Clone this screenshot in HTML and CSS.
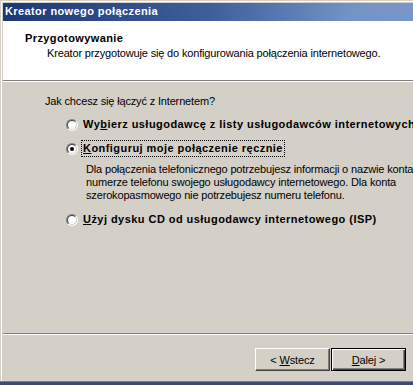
FILE: index.html
```html
<!DOCTYPE html>
<html>
<head>
    <meta charset="utf-8">
    <title>Kreator nowego połączenia</title>
    <link rel="stylesheet" href="styles.css">
</head>
<body>
<div class="window">
    <div class="frame">
        <div class="titlebar">Kreator nowego połączenia</div>
        <div class="header">
            <div class="header-title">Przygotowywanie</div>
            <div class="header-sub">Kreator przygotowuje się do konfigurowania połączenia internetowego.</div>
        </div>
        <div class="content">
            <div class="question">Jak chcesz się łączyć z Internetem?</div>
            <div class="option">
                <span class="radio"></span>
                <span class="option-label">Wy<u>b</u>ierz usługodawcę z listy usługodawców internetowych</span>
            </div>
            <div class="option">
                <span class="radio checked"></span>
                <span class="option-label focused"><u>K</u>onfiguruj moje połączenie ręcznie</span>
            </div>
            <div class="option-desc">Dla połączenia telefonicznego potrzebujesz informacji o nazwie konta,<br>
                numerze telefonu swojego usługodawcy internetowego. Dla konta<br>
                szerokopasmowego nie potrzebujesz numeru telefonu.</div>
            <div class="option">
                <span class="radio"></span>
                <span class="option-label"><u>U</u>żyj dysku CD od usługodawcy internetowego (ISP)</span>
            </div>
        </div>
        <div class="buttons">
            <button class="btn">&lt; <u>W</u>stecz</button>
            <button class="btn default"><u>D</u>alej &gt;</button>
        </div>
    </div>
</div>
</body>
</html>
```

FILE: styles.css
```css
html, body {
    margin: 0;
    padding: 0;
    overflow: hidden;
}

body {
    background: #3a4a72;
    width: 413px;
    height: 385px;
    font: 11px "Liberation Sans", Arial, sans-serif;
    letter-spacing: -0.16px;
    color: #000;
}

/* outer window border: light gray, then white */
.window {
    width: 413px;
    height: 382px;
    background: #d4d0c8;
    border-bottom: 1px solid #808080;
    box-sizing: border-box;
    padding: 1px 0 0 1px;
    overflow: hidden;
}

.frame {
    width: 520px;
    height: 100%;
    border-left: 1px solid #fff;
    border-top: 1px solid #fff;
    padding: 1px 0 0 1px;
    box-sizing: border-box;
    display: flex;
    flex-direction: column;
}

.titlebar {
    height: 18px;
    line-height: 17px;
    padding-left: 2px;
    color: #fff;
    font-weight: bold;
    letter-spacing: 0.4px;
    background: linear-gradient(to right, #1c3874 0%, #3f5e9c 40%, #7594c6 68%, #7d9dcc 100%);
    white-space: nowrap;
}

.header {
    height: 60px;
    background: #fff;
    border-bottom: 1px solid #808080;
    box-shadow: 0 1px 0 #fff;
    padding: 11px 0 0 22px;
    box-sizing: border-box;
}

.header-title {
    font-weight: bold;
    letter-spacing: 0.4px;
    line-height: 13px;
}

.header-sub {
    margin-top: 2px;
    padding-left: 22px;
    line-height: 13px;
    white-space: nowrap;
}

.content {
    flex: 1;
    padding: 13px 0 0 42px;
    margin-top: 1px;
    border-bottom: 1px solid #808080;
    box-shadow: 0 1px 0 #fff;
}

.question {
    line-height: 13px;
    margin-bottom: 10px;
}

.option {
    display: flex;
    align-items: center;
    padding-left: 21px;
    height: 13px;
    margin-bottom: 11px;
    white-space: nowrap;
}

.option-label {
    font-weight: bold;
    letter-spacing: 0.45px;
    margin-left: 5px;
    line-height: 13px;
}

.focused {
    outline: 1px dotted #000;
    outline-offset: 1px;
}

/* classic sunken radio button */
.radio {
    width: 12px;
    height: 12px;
    box-sizing: border-box;
    border-radius: 50%;
    border: 1px solid;
    border-color: #808080 #fff #fff #808080;
    flex: none;
    position: relative;
}

.radio::before {
    content: "";
    position: absolute;
    inset: 0;
    border-radius: 50%;
    border: 1px solid;
    border-color: #404040 #d4d0c8 #d4d0c8 #404040;
    background: #fff;
}

.radio.checked::after {
    content: "";
    position: absolute;
    left: 3px;
    top: 3px;
    width: 4px;
    height: 4px;
    border-radius: 50%;
    background: #000;
}

.option-desc {
    padding-left: 41px;
    margin-top: -3px;
    margin-bottom: 11px;
    line-height: 13px;
    white-space: nowrap;
}

.buttons {
    height: 46px;
    margin-top: 1px;
    padding: 13px 0 0 252px;
    box-sizing: border-box;
    display: flex;
}

.btn {
    width: 75px;
    height: 23px;
    padding: 0;
    margin: 0;
    font: 11px "Liberation Sans", Arial, sans-serif;
    letter-spacing: -0.16px;
    color: #000;
    background: #d4d0c8;
    border: 1px solid;
    border-color: #fff #404040 #404040 #fff;
    box-shadow: inset -1px -1px 0 #808080;
}

.btn.default {
    margin-left: 1px;
    border: 1px solid #000;
    box-shadow: inset 1px 1px 0 #fff, inset -1px -1px 0 #404040, inset -2px -2px 0 #808080;
}
```
